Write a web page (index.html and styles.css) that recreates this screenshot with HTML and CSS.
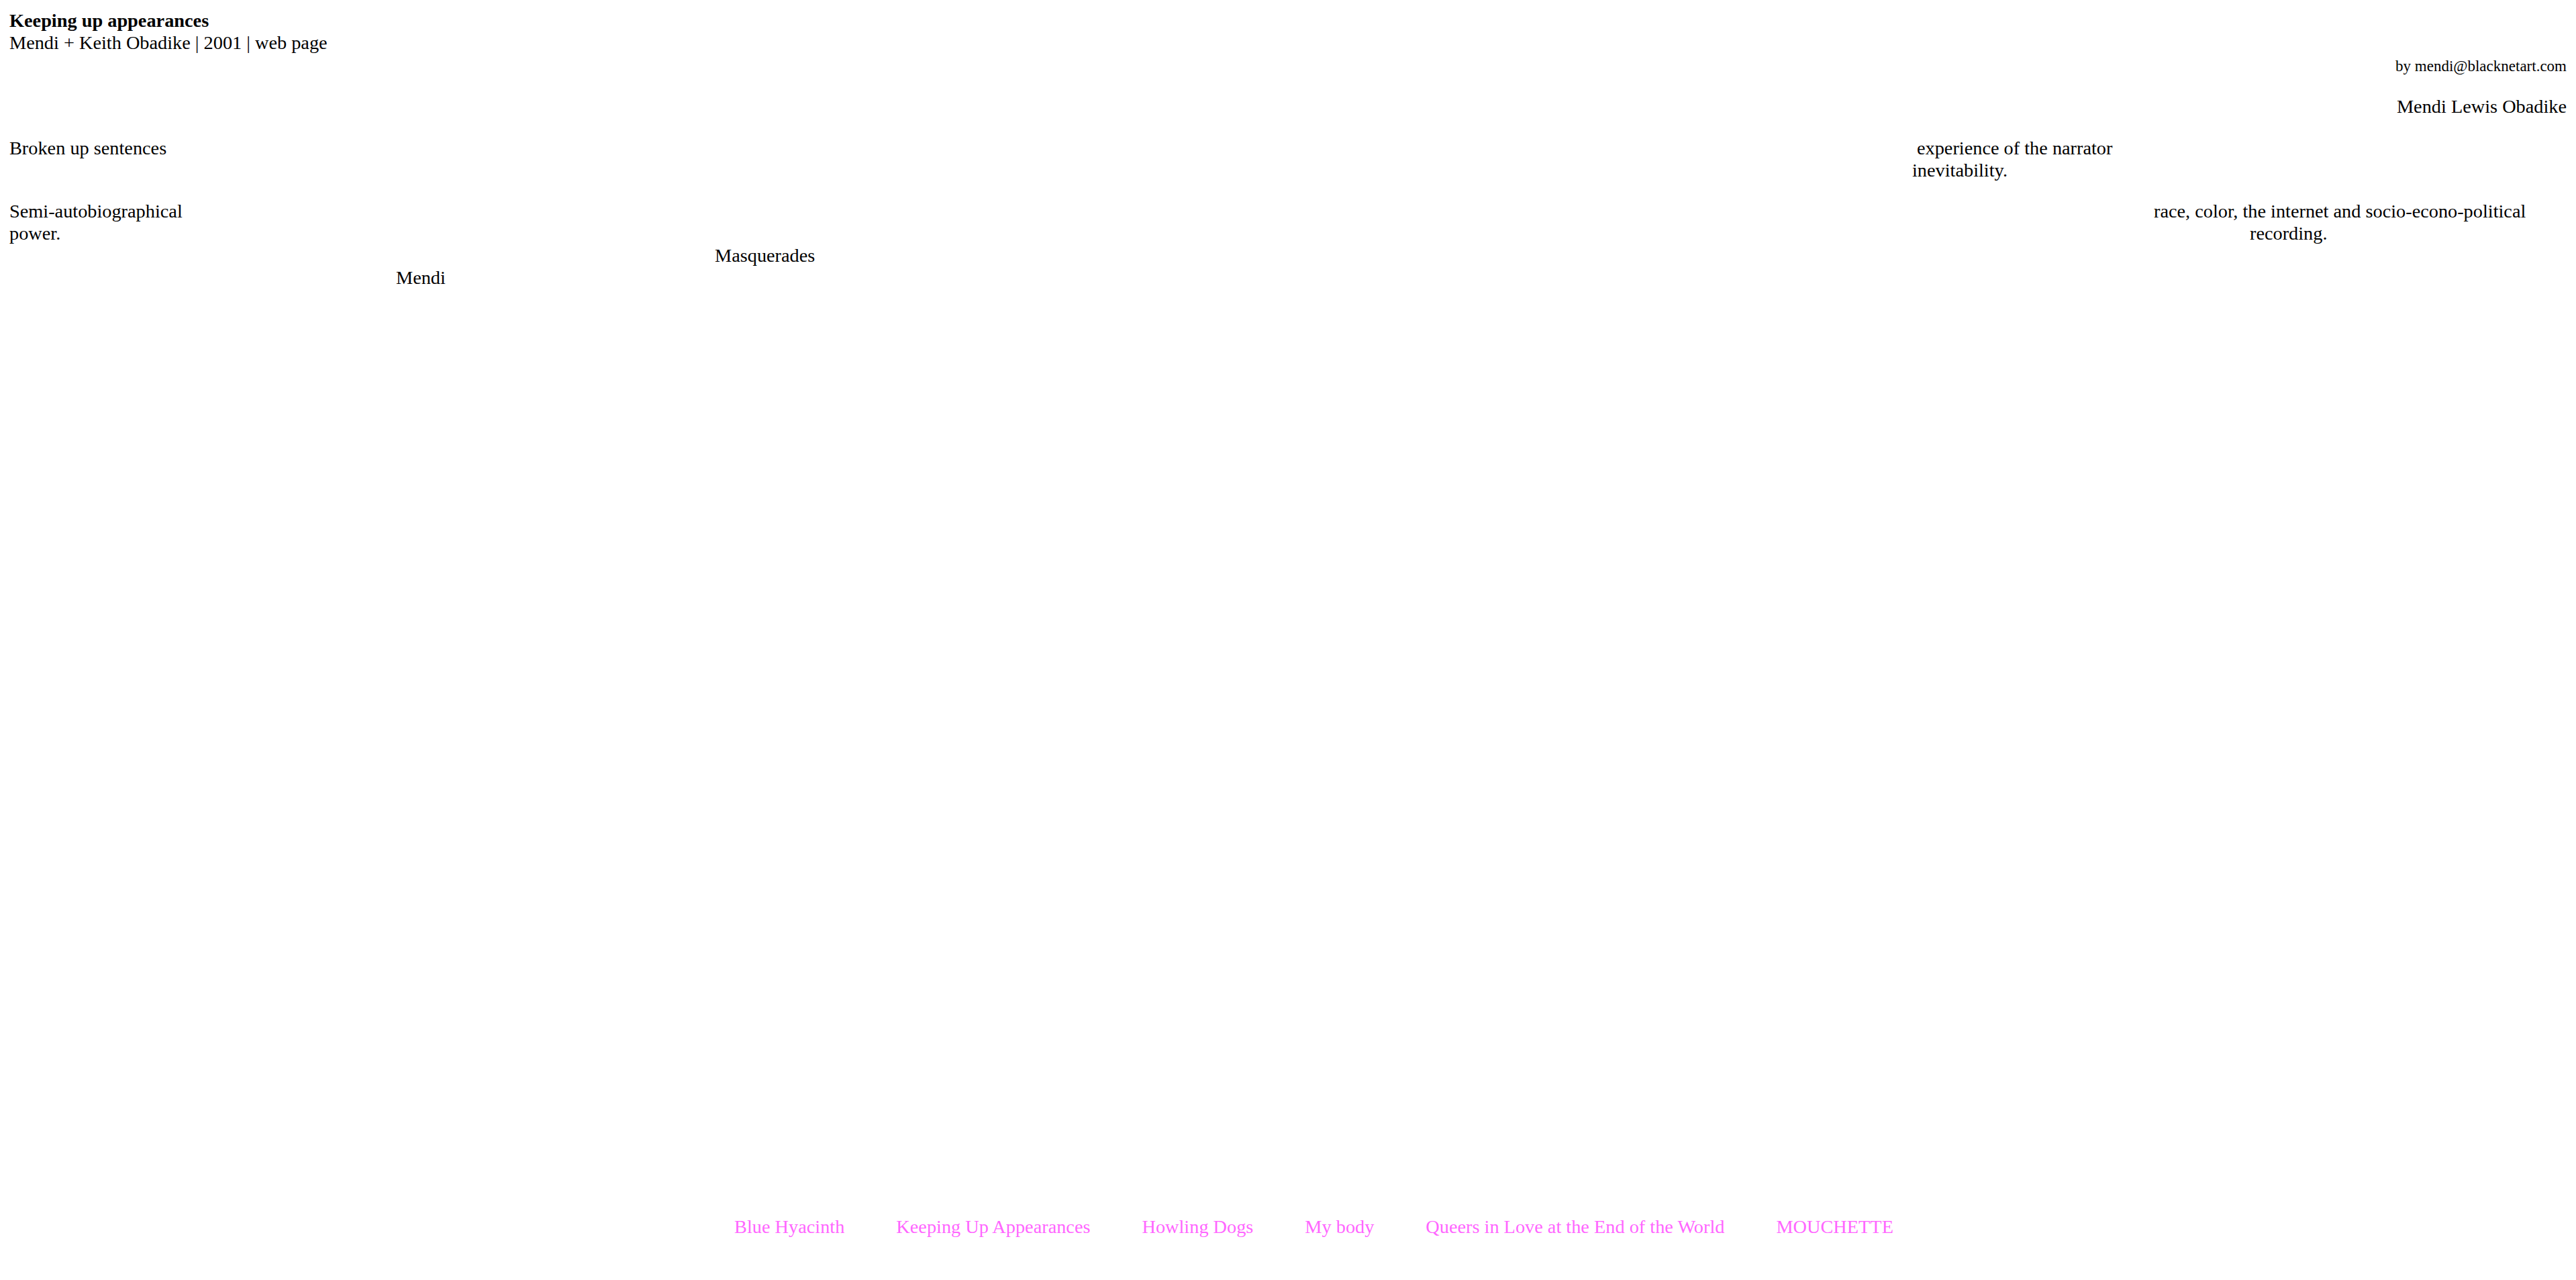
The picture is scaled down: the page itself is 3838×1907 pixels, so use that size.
FILE: index.html
```html
<!DOCTYPE html>
<html lang="en">
<head>
<meta charset="utf-8">
<title>Keeping up appearances</title>
<link rel="stylesheet" href="styles.css">
</head>
<body>
<div class="page">
  <header class="head">
    <div class="title">Keeping up appearances</div>
    <div class="credit">Mendi + Keith Obadike | 2001 | web page</div>
    <div class="byline"><small class="small">by mendi@blacknetart.com</small></div>
  </header>

  <p class="author">Mendi Lewis Obadike</p>

  <div class="para two-col">
    <div class="cell">Broken up sentences</div>
    <div class="cell">
      <div class="exp">experience of the narrator</div>
      <div>inevitability.</div>
    </div>
  </div>

  <div class="para">
    <div class="line row-race">
      <span>Semi-autobiographical</span>
      <span>race, color, the internet and socio-econo-political</span>
    </div>
    <div class="line row-rec">
      <span>power.</span>
      <span>recording.</span>
    </div>
    <div class="line ind-masq">Masquerades</div>
    <div class="line ind-mendi">Mendi</div>
  </div>

  <nav class="nav">
    <a href="#" class="nav-link">Blue Hyacinth</a>
    <a href="#" class="nav-link">Keeping Up Appearances</a>
    <a href="#" class="nav-link">Howling Dogs</a>
    <a href="#" class="nav-link">My body</a>
    <a href="#" class="nav-link">Queers in Love at the End of the World</a>
    <a href="#" class="nav-link">MOUCHETTE</a>
  </nav>
</div>
</body>
</html>
```
FILE: styles.css
```css
html, body {
  margin: 0;
  padding: 0;
  background: #ffffff;
}

body {
  font-family: "Liberation Serif", "Times New Roman", serif;
  font-size: 28.3px;
  line-height: 33px;
  color: #000000;
}

.page {
  box-sizing: border-box;
  min-height: 100vh;
  padding: 14px 14px 63px;
  display: flex;
  flex-direction: column;
}

.title {
  font-weight: bold;
}

.byline {
  text-align: right;
}

.small {
  font-size: 23px;
}

.author {
  margin: 27px 0 0;
  text-align: right;
}

.para {
  margin: 28px 0 0;
  white-space: nowrap;
}

.author + .para {
  margin-top: 29px;
}

.two-col {
  display: grid;
  grid-template-columns: 2835px auto;
}

.exp {
  padding-left: 7px;
}

.line {
  display: grid;
}

.row-race {
  grid-template-columns: 3195px auto;
}

.row-rec {
  grid-template-columns: 3338px auto;
}

.ind-masq {
  padding-left: 1051px;
}

.ind-mendi {
  padding-left: 576px;
}

.nav {
  margin-top: auto;
  display: flex;
  justify-content: center;
  white-space: nowrap;
}

.nav-link {
  margin-left: 77px;
  color: #ff66ff;
  text-decoration: none;
}
```
